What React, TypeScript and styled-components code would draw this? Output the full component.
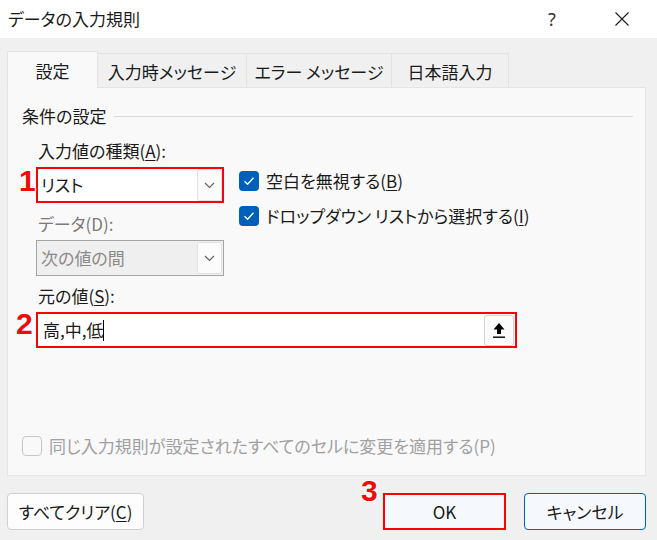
import styled, { createGlobalStyle } from 'styled-components';

const GlobalStyle = createGlobalStyle`
  html, body {
    margin: 0;
    padding: 0;
  }
  body {
    width: 657px;
    height: 540px;
    overflow: hidden;
    background: #f0f0f0;
    font-family: 'Noto Sans CJK JP', 'Noto Sans', sans-serif;
    font-feature-settings: 'palt' 1;
    font-size: 17px;
    color: #1a1a1a;
  }
`;

const Window = styled.div`
  width: 657px;
  height: 540px;
  display: flex;
  flex-direction: column;
`;

const TitleBar = styled.div`
  height: 38px;
  background: #ffffff;
  display: flex;
  align-items: center;
`;

const Title = styled.div`
  flex: 1;
  padding-left: 8px;
  line-height: 24px;
`;

const TitleButton = styled.div`
  width: 70px;
  height: 38px;
  display: flex;
  align-items: center;
  justify-content: center;
  font-family: 'Noto Sans', sans-serif;
  font-size: 18px;
  color: #333333;
`;

const Body = styled.div`
  flex: 1;
  padding: 13px 11px 0 7px;
  display: flex;
  flex-direction: column;
`;

const TabList = styled.div`
  height: 36px;
  display: flex;
  align-items: flex-end;
`;

const Tab = styled.div<{ $active?: boolean; $width: number }>`
  box-sizing: border-box;
  width: ${(p) => p.$width}px;
  height: ${(p) => (p.$active ? '37px' : '34px')};
  margin-bottom: ${(p) => (p.$active ? '-1px' : '0')};
  padding-top: 2px;
  display: flex;
  align-items: center;
  justify-content: center;
  border: 1px solid #e3e3e3;
  border-bottom: none;
  background: ${(p) => (p.$active ? '#f9f9f9' : '#f0f0f0')};
  position: relative;
  z-index: ${(p) => (p.$active ? 1 : 0)};
  line-height: 24px;
  white-space: nowrap;
  & + & {
    margin-left: -1px;
  }
`;

const Panel = styled.div`
  box-sizing: border-box;
  height: 389px;
  border: 1px solid #e5e5e5;
  background: #f9f9f9;
  padding: 16px 12px 19px 14px;
  display: flex;
  flex-direction: column;
`;

const GroupHeader = styled.div`
  height: 24px;
  display: flex;
  align-items: center;
  line-height: 24px;
`;

const GroupLine = styled.div`
  flex: 1;
  margin-left: 8px;
  border-top: 1px solid #d9d9d9;
`;

const Form = styled.div`
  margin-left: 14px;
  display: flex;
  flex-direction: column;
`;

const TopRow = styled.div`
  margin-top: 11px;
  display: flex;
  gap: 15px;
`;

const FieldColumn = styled.div`
  width: 188px;
  display: flex;
  flex-direction: column;
`;

const FieldLabel = styled.div<{ $disabled?: boolean; $gap?: number }>`
  line-height: 24px;
  padding-left: 2px;
  margin-top: ${(p) => p.$gap ?? 0}px;
  margin-bottom: 4px;
  color: ${(p) => (p.$disabled ? '#7a7a7a' : '#1a1a1a')};
  white-space: nowrap;
`;

const U = styled.span`
  text-decoration: underline;
  text-underline-offset: 2px;
`;

const Select = styled.div<{ $marked?: boolean; $disabled?: boolean }>`
  position: relative;
  box-sizing: border-box;
  height: 36px;
  display: flex;
  align-items: center;
  border: ${(p) => (p.$marked ? '2px solid #ff0000' : '1px solid #a5a5a5')};
  padding: ${(p) => (p.$marked ? '0' : '1px')};
  background: ${(p) => (p.$disabled ? '#efefef' : '#ffffff')};
  color: ${(p) => (p.$disabled ? '#8a8a8a' : '#1a1a1a')};
`;

const SelectText = styled.div`
  flex: 1;
  padding-left: 3px;
  line-height: 24px;
`;

const DropButton = styled.div`
  box-sizing: border-box;
  width: 25px;
  height: 32px;
  display: flex;
  align-items: center;
  justify-content: center;
  border: 1px solid #e2e2e2;
  border-radius: 2px;
  background: #fbfbfb;
`;

const Marker = styled.span<{ $left: number; $top: number }>`
  position: absolute;
  left: ${(p) => p.$left}px;
  top: ${(p) => p.$top}px;
  font-family: 'Liberation Sans', Arial, sans-serif;
  font-weight: 700;
  font-size: 30px;
  line-height: 1;
  color: #f00a0a;
  text-shadow: 1px 0 #fff, -1px 0 #fff, 0 1px #fff, 0 -1px #fff, 1px 1px #fff,
    -1px -1px #fff, 1px -1px #fff, -1px 1px #fff;
`;

const CheckColumn = styled.div`
  padding-top: 32px;
  display: flex;
  flex-direction: column;
  gap: 15px;
`;

const CheckRow = styled.div<{ $disabled?: boolean }>`
  height: 20px;
  display: flex;
  align-items: center;
  gap: 7px;
  line-height: 24px;
  white-space: nowrap;
  color: ${(p) => (p.$disabled ? '#a0a0a0' : '#1a1a1a')};
`;

const CheckBox = styled.div<{ $checked?: boolean }>`
  box-sizing: border-box;
  width: 20px;
  height: 20px;
  border-radius: 4px;
  display: flex;
  align-items: center;
  justify-content: center;
  background: ${(p) => (p.$checked ? '#005fb8' : '#f9f9f9')};
  border: ${(p) => (p.$checked ? 'none' : '1px solid #c6c6c6')};
`;

const SourceInput = styled.div`
  position: relative;
  box-sizing: border-box;
  width: 481px;
  height: 36px;
  display: flex;
  align-items: center;
  border: 2px solid #ff0000;
  background: #ffffff;
  padding: 0 1px 0 5px;
`;

const InputText = styled.div`
  flex: 1;
  display: flex;
  align-items: center;
  line-height: 24px;
`;

const Caret = styled.span`
  display: inline-block;
  width: 1px;
  height: 21px;
  background: #000000;
`;

const RefButton = styled.div`
  box-sizing: border-box;
  width: 30px;
  height: 31px;
  display: flex;
  align-items: center;
  justify-content: center;
  border: 1px solid #d4d4d4;
  border-radius: 3px;
  background: #fbfbfb;
`;

const BottomCheck = styled(CheckRow)`
  margin-top: auto;
`;

const Footer = styled.div`
  margin-top: 17px;
  display: flex;
  justify-content: space-between;
`;

const ButtonGroup = styled.div`
  display: flex;
  gap: 18px;
`;

const Button = styled.div<{ $width: number; $variant?: 'marked' | 'accent' }>`
  position: relative;
  box-sizing: border-box;
  width: ${(p) => p.$width}px;
  height: 37px;
  display: flex;
  align-items: center;
  justify-content: center;
  line-height: 24px;
  background: ${(p) => (p.$variant ? '#f5f9fd' : '#fdfdfd')};
  border: ${(p) =>
    p.$variant === 'marked'
      ? '2px solid #ff0000'
      : p.$variant === 'accent'
        ? '1px solid #005fb8'
        : '1px solid #d0d0d0'};
  border-radius: ${(p) => (p.$variant === 'marked' ? '0' : '4px')};
`;

const Chevron = () => (
  <svg width="11" height="7" viewBox="0 0 11 7">
    <path d="M1 1 L5.5 5.5 L10 1" fill="none" stroke="#5f5f5f" strokeWidth="1.1" />
  </svg>
);

const Check = () => (
  <svg width="14" height="14" viewBox="0 0 14 14">
    <path d="M2.5 7.2 L5.6 10.2 L11.5 3.8" fill="none" stroke="#ffffff" strokeWidth="1.3" />
  </svg>
);

const UploadIcon = () => (
  <svg width="14" height="17" viewBox="0 0 14 17">
    <path d="M7 1 L12.5 7.5 H9 V12 H5 V7.5 H1.5 Z" fill="#000000" />
    <rect x="1" y="14.5" width="12" height="1.4" fill="#000000" />
  </svg>
);

const CloseIcon = () => (
  <svg width="16" height="16" viewBox="0 0 16 16">
    <path d="M1.5 1.5 L14.5 14.5 M14.5 1.5 L1.5 14.5" stroke="#1a1a1a" strokeWidth="1.1" />
  </svg>
);

export default function App() {
  return (
    <>
      <GlobalStyle />
      <Window>
        <TitleBar>
          <Title>データの入力規則</Title>
          <TitleButton>?</TitleButton>
          <TitleButton>
            <CloseIcon />
          </TitleButton>
        </TitleBar>
        <Body>
          <TabList>
            <Tab $active $width={91}>設定</Tab>
            <Tab $width={150}>入力時メッセージ</Tab>
            <Tab $width={146}>エラー メッセージ</Tab>
            <Tab $width={118}>日本語入力</Tab>
          </TabList>
          <Panel>
            <GroupHeader>
              条件の設定
              <GroupLine />
            </GroupHeader>
            <Form>
              <TopRow>
                <FieldColumn>
                  <FieldLabel>
                    入力値の種類(<U>A</U>):
                  </FieldLabel>
                  <Select $marked>
                    <Marker $left={-19} $top={-3}>1</Marker>
                    <SelectText>リスト</SelectText>
                    <DropButton>
                      <Chevron />
                    </DropButton>
                  </Select>
                  <FieldLabel $disabled $gap={9}>
                    データ(D):
                  </FieldLabel>
                  <Select $disabled>
                    <SelectText>次の値の間</SelectText>
                    <DropButton>
                      <Chevron />
                    </DropButton>
                  </Select>
                </FieldColumn>
                <CheckColumn>
                  <CheckRow>
                    <CheckBox $checked>
                      <Check />
                    </CheckBox>
                    <span>
                      空白を無視する(<U>B</U>)
                    </span>
                  </CheckRow>
                  <CheckRow>
                    <CheckBox $checked>
                      <Check />
                    </CheckBox>
                    <span>
                      ドロップダウン リストから選択する(<U>I</U>)
                    </span>
                  </CheckRow>
                </CheckColumn>
              </TopRow>
              <FieldLabel $gap={8}>
                元の値(<U>S</U>):
              </FieldLabel>
              <SourceInput>
                <Marker $left={-22} $top={-5}>2</Marker>
                <InputText>
                  高,中,低
                  <Caret />
                </InputText>
                <RefButton>
                  <UploadIcon />
                </RefButton>
              </SourceInput>
            </Form>
            <BottomCheck $disabled>
              <CheckBox />
              <span>同じ入力規則が設定されたすべてのセルに変更を適用する(P)</span>
            </BottomCheck>
          </Panel>
          <Footer>
            <Button $width={137}>
              すべてクリア(<U>C</U>)
            </Button>
            <ButtonGroup>
              <Button $width={123} $variant="marked">
                <Marker $left={-24} $top={-19}>3</Marker>
                OK
              </Button>
              <Button $width={122} $variant="accent">
                キャンセル
              </Button>
            </ButtonGroup>
          </Footer>
        </Body>
      </Window>
    </>
  );
}
